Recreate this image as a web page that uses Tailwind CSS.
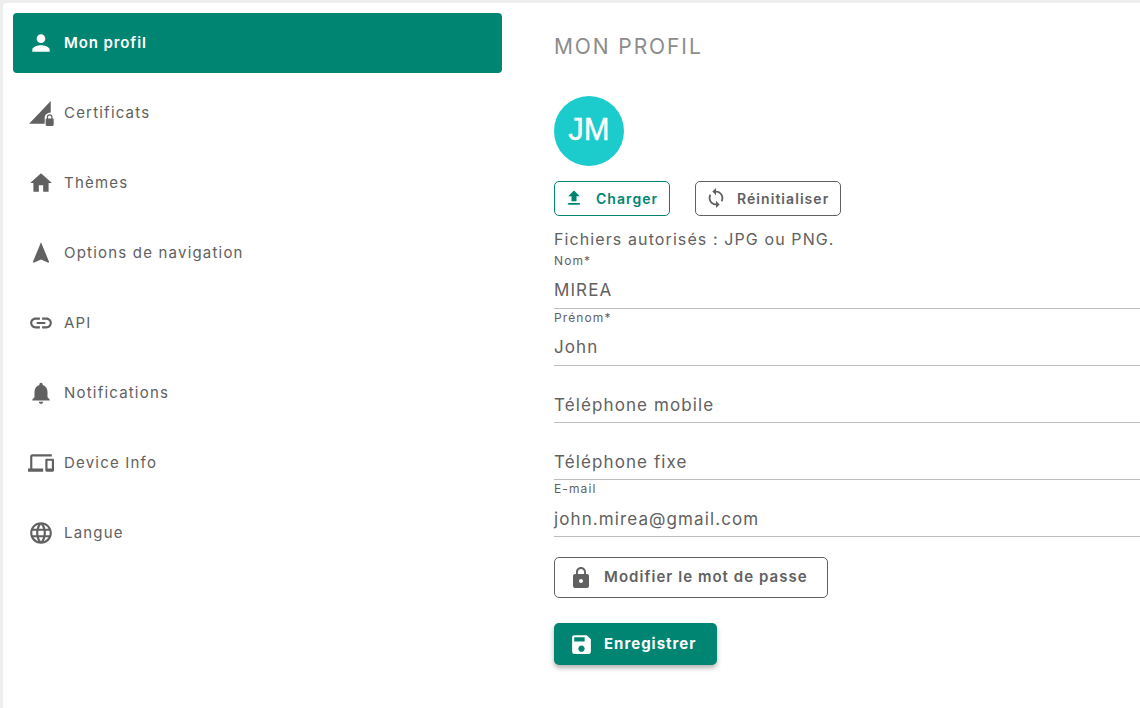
<!DOCTYPE html>
<html lang="fr">
<head>
    <meta charset="UTF-8">
    <title>Mon profil</title>
    <script src="https://cdn.jsdelivr.net/npm/@tailwindcss/browser@4"></script>
</head>
<body class="bg-[#eeeeee] h-[708px] w-[1140px] overflow-hidden font-['Inter',sans-serif]">
    <div class="ml-[3px] mt-[3px] h-[705px] bg-white rounded-tl-[4px] flex">

        <!-- Sidebar -->
        <nav class="w-[499px] pl-[10px] pt-[10px] flex flex-col text-[15px] text-[#616161] tracking-[1.2px]">
            <a class="h-[60px] w-[489px] rounded-[4px] bg-[#008573] text-white font-semibold tracking-[0.9px] flex items-center pl-[15px] gap-[10px]">
                <svg class="w-[26px] h-[26px]" viewBox="0 0 24 24" fill="currentColor"><path d="M12 12c2.21 0 4-1.79 4-4s-1.79-4-4-4-4 1.79-4 4 1.79 4 4 4zm0 2c-2.67 0-8 1.34-8 4v2h16v-2c0-2.66-5.33-4-8-4z"/></svg>
                Mon profil
            </a>
            <a class="h-[70px] flex items-center pl-[15px] gap-[10px] pt-[10px]">
                <svg class="w-[26px] h-[26px]" viewBox="0 0 24 24" fill="currentColor"><path d="M21 1v10.5c-3.6.3-5.6 2.5-5.6 5V22H1z"/><path d="M22.6 17v-1.2a2.6 2.6 0 0 0-5.2 0V17c-.6 0-1.1.5-1.1 1.1v4.8c0 .6.5 1.1 1.1 1.1h5.2c.6 0 1.1-.5 1.1-1.1v-4.8c0-.6-.5-1.1-1.1-1.1zm-1.1 0h-3v-1.2a1.5 1.5 0 0 1 3 0V17z"/></svg>
                Certificats
            </a>
            <a class="h-[70px] flex items-center pl-[15px] gap-[10px] pt-[10px]">
                <svg class="w-[26px] h-[26px]" viewBox="0 0 24 24" fill="currentColor"><path d="M10 20v-6h4v6h5v-8h3L12 3 2 12h3v8z"/></svg>
                Thèmes
            </a>
            <a class="h-[70px] flex items-center pl-[15px] gap-[10px] pt-[10px]">
                <svg class="w-[26px] h-[26px]" viewBox="0 0 24 24" fill="currentColor"><path d="M12 2L4.5 20.29l.71.71L12 18l6.79 3 .71-.71z"/></svg>
                Options de navigation
            </a>
            <a class="h-[70px] flex items-center pl-[15px] gap-[10px] pt-[10px]">
                <svg class="w-[26px] h-[26px]" viewBox="0 0 24 24" fill="currentColor"><path d="M3.9 12c0-1.71 1.39-3.1 3.1-3.1h4V7H7c-2.76 0-5 2.24-5 5s2.24 5 5 5h4v-1.9H7c-1.71 0-3.1-1.39-3.1-3.1zM8 13h8v-2H8v2zm9-6h-4v1.9h4c1.71 0 3.1 1.39 3.1 3.1s-1.39 3.1-3.1 3.1h-4V17h4c2.76 0 5-2.24 5-5s-2.24-5-5-5z"/></svg>
                API
            </a>
            <a class="h-[70px] flex items-center pl-[15px] gap-[10px] pt-[10px]">
                <svg class="w-[26px] h-[26px]" viewBox="0 0 24 24" fill="currentColor"><path d="M12 22c1.1 0 2-.9 2-2h-4c0 1.1.89 2 2 2zm6-6v-5c0-3.07-1.64-5.64-4.5-6.32V4c0-.83-.67-1.5-1.5-1.5s-1.5.67-1.5 1.5v.68C7.63 5.36 6 7.92 6 11v5l-2 2v1h16v-1l-2-2z"/></svg>
                Notifications
            </a>
            <a class="h-[70px] flex items-center pl-[15px] gap-[10px] pt-[10px]">
                <svg class="w-[26px] h-[26px]" viewBox="0 0 24 24" fill="currentColor"><path d="M4 6h18V4H4c-1.1 0-2 .9-2 2v11H0v3h14v-3H4V6zm19 2h-6c-.55 0-1 .45-1 1v10c0 .55.45 1 1 1h6c.55 0 1-.45 1-1V9c0-.55-.45-1-1-1zm-1 9h-4v-7h4v7z"/></svg>
                Device Info
            </a>
            <a class="h-[70px] flex items-center pl-[15px] gap-[10px] pt-[10px]">
                <svg class="w-[26px] h-[26px]" viewBox="0 0 24 24" fill="currentColor"><path d="M11.99 2C6.47 2 2 6.48 2 12s4.47 10 9.99 10C17.52 22 22 17.52 22 12S17.52 2 11.99 2zm6.93 6h-2.95c-.32-1.25-.78-2.45-1.38-3.56 1.84.63 3.37 1.91 4.33 3.56zM12 4.04c.83 1.2 1.48 2.53 1.91 3.96h-3.82c.43-1.43 1.08-2.76 1.91-3.96zM4.26 14C4.1 13.36 4 12.69 4 12s.1-1.36.26-2h3.38c-.08.66-.14 1.32-.14 2s.06 1.34.14 2H4.26zm.82 2h2.95c.32 1.25.78 2.45 1.38 3.56-1.84-.63-3.37-1.9-4.33-3.56zm2.95-8H5.08c.96-1.66 2.49-2.93 4.33-3.56C8.81 5.55 8.35 6.75 8.03 8zM12 19.96c-.83-1.2-1.48-2.53-1.91-3.96h3.82c-.43 1.43-1.08 2.76-1.91 3.96zM14.34 14H9.66c-.09-.66-.16-1.32-.16-2s.07-1.35.16-2h4.68c.09.65.16 1.32.16 2s-.07 1.34-.16 2zm.25 5.56c.6-1.11 1.06-2.31 1.38-3.56h2.95c-.96 1.65-2.49 2.93-4.33 3.56zM16.36 14c.08-.66.14-1.32.14-2s-.06-1.34-.14-2h3.38c.16.64.26 1.31.26 2s-.1 1.36-.26 2h-3.38z"/></svg>
                Langue
            </a>
        </nav>

        <!-- Main -->
        <main class="flex-1 pl-[52px] text-[#616161]">
            <h1 class="mt-[31px] text-[21px] leading-[26px] tracking-[1.9px] text-[#8c8c8c]">MON PROFIL</h1>
            <div class="mt-[36px] w-[70px] h-[70px] rounded-full bg-[#1ccbcb] text-white flex items-center justify-center pb-[2px] text-[31px] [-webkit-text-stroke:0.4px_white] font-['Liberation_Sans',sans-serif]">JM</div>

            <div class="mt-[15px] flex gap-[25px] text-[14px] font-semibold tracking-[1.05px]">
                <button class="h-[35px] w-[116px] border border-[#008573] text-[#008573] rounded-[5px] flex items-center pl-[9px] pb-[1px] gap-[12px]">
                    <svg class="w-5 h-5" viewBox="0 0 24 24" fill="currentColor"><path d="M5 20h14v-2H5v2zm4-4h6v-6h4l-7-7-7 7h4v6z"/></svg>
                    Charger
                </button>
                <button class="h-[35px] w-[146px] border border-[#616161] rounded-[5px] flex items-center pl-[9px] pb-[1px] gap-[10px]">
                    <svg class="w-[22px] h-[22px]" viewBox="0 0 24 24" fill="currentColor"><path d="M12 4V1L8 5l4 4V6c3.31 0 6 2.69 6 6 0 1.01-.25 1.97-.7 2.8l1.46 1.46C19.54 15.03 20 13.57 20 12c0-4.42-3.58-8-8-8zm0 14c-3.31 0-6-2.69-6-6 0-1.01.25-1.97.7-2.8L5.24 7.74C4.46 8.97 4 10.43 4 12c0 4.42 3.58 8 8 8v3l4-4-4-4v3z"/></svg>
                    Réinitialiser
                </button>
            </div>

            <p class="mt-[13px] text-[16px] leading-[20px] tracking-[1.1px]">Fichiers autorisés : JPG ou PNG.</p>

            <div class="h-[60px] border-b border-[#bdbdbd] flex flex-col">
                <label class="text-[12px] leading-[13px] mt-[5px] h-[13px] tracking-[1.1px]">Nom*</label>
                <span class="mt-[13px] text-[17px] leading-[20px] tracking-[1.1px]">MIREA</span>
            </div>
            <div class="h-[57px] border-b border-[#bdbdbd] flex flex-col">
                <label class="text-[12px] leading-[13px] mt-[2px] h-[13px] tracking-[1.1px]">Prénom*</label>
                <span class="mt-[13px] text-[17px] leading-[20px] tracking-[1.1px]">John</span>
            </div>
            <div class="h-[57px] border-b border-[#bdbdbd] flex flex-col justify-end pb-[7px]">
                <span class="text-[17px] leading-[20px] tracking-[1.1px]">Téléphone mobile</span>
            </div>
            <div class="h-[57px] border-b border-[#bdbdbd] flex flex-col justify-end pb-[7px]">
                <span class="text-[17px] leading-[20px] tracking-[1.1px]">Téléphone fixe</span>
            </div>
            <div class="h-[57px] border-b border-[#bdbdbd] flex flex-col">
                <label class="text-[12px] leading-[13px] mt-[2px] h-[13px] tracking-[1.1px]">E-mail</label>
                <span class="mt-[14px] text-[17px] leading-[20px] tracking-[1.1px]">john.mirea@gmail.com</span>
            </div>

            <button class="mt-[20px] h-[41px] w-[274px] border border-[#616161] rounded-[5px] flex items-center pl-[14px] gap-[11px] text-[15px] font-semibold tracking-[1.05px]">
                <svg class="w-6 h-6" viewBox="0 0 24 24" fill="currentColor"><path d="M18 8h-1V6c0-2.76-2.24-5-5-5S7 3.24 7 6v2H6c-1.1 0-2 .9-2 2v10c0 1.1.9 2 2 2h12c1.1 0 2-.9 2-2V10c0-1.1-.9-2-2-2zm-6 9c-1.1 0-2-.9-2-2s.9-2 2-2 2 .9 2 2-.9 2-2 2zm3.1-9H8.9V6c0-1.71 1.39-3.1 3.1-3.1 1.71 0 3.1 1.39 3.1 3.1v2z"/></svg>
                Modifier le mot de passe
            </button>
            <button class="mt-[25px] h-[42px] w-[163px] rounded-[5px] bg-[#008573] text-white flex items-center pl-[15px] gap-[10px] text-[15px] font-bold tracking-[1px] shadow-[0_3px_5px_rgba(0,0,0,0.3)]">
                <svg class="w-[25px] h-[25px]" viewBox="0 0 24 24" fill="currentColor"><path d="M17 3H5c-1.11 0-2 .9-2 2v14c0 1.1.89 2 2 2h14c1.1 0 2-.9 2-2V7l-4-4zm-5 16c-1.66 0-3-1.34-3-3s1.34-3 3-3 3 1.34 3 3-1.34 3-3 3zm3-10H5V5h10v4z"/></svg>
                Enregistrer
            </button>
        </main>
    </div>
</body>
</html>
